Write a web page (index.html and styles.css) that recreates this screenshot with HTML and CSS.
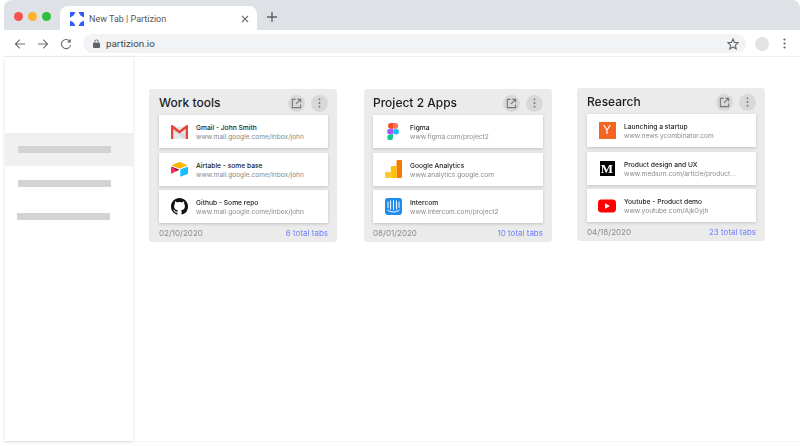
FILE: index.html
```html
<!DOCTYPE html>
<html lang="en">
<head>
  <meta charset="UTF-8">
  <title>New Tab | Partizion</title>
  <link rel="stylesheet" href="styles.css">
</head>
<body>
  <div class="browser">
    <div class="tab-strip">
      <div class="lights">
        <span class="light light-red"></span>
        <span class="light light-yellow"></span>
        <span class="light light-green"></span>
      </div>
      <div class="tab">
        <svg class="tab-logo" viewBox="0 0 14 14" width="14" height="14">
          <path fill="#2f5bff" d="M0 0H5.5L3.5 3.5L0 5.5ZM14 0H8.5L10.5 3.5L14 5.5ZM0 14H5.5L3.5 10.5L0 8.5ZM14 14H8.5L10.5 10.5L14 8.5Z"/>
        </svg>
        <span class="tab-title">New Tab | Partizion</span>
        <svg class="tab-close" viewBox="0 0 8 8" width="8" height="8">
          <path d="M1 1L7 7M7 1L1 7" stroke="#6b6f73" stroke-width="1.1" fill="none"/>
        </svg>
      </div>
      <svg class="new-tab" viewBox="0 0 10 10" width="10" height="10">
        <path d="M5 0V10M0 5H10" stroke="#5f6368" stroke-width="1.4" fill="none"/>
      </svg>
    </div>

    <div class="toolbar">
      <svg class="nav-icon" viewBox="0 0 12 12" width="12" height="12">
        <path d="M11 6H1.5M5.8 1.6L1.4 6L5.8 10.4" stroke="#6b6f73" stroke-width="1.1" fill="none"/>
      </svg>
      <svg class="nav-icon" viewBox="0 0 12 12" width="12" height="12">
        <path d="M1 6H10.5M6.2 1.6L10.6 6L6.2 10.4" stroke="#6b6f73" stroke-width="1.1" fill="none"/>
      </svg>
      <svg class="nav-icon" viewBox="0 0 12 12" width="12" height="12">
        <path d="M10 3.6A4.6 4.6 0 1 0 10.6 7" stroke="#6b6f73" stroke-width="1.1" fill="none"/>
        <path d="M10.8 0.8V4.6H7Z" fill="#6b6f73"/>
      </svg>
      <div class="url-bar">
        <svg class="lock" viewBox="0 0 8 10" width="7" height="9">
          <path fill="#5f6368" d="M1 4H1.6V2.8A2.4 2.4 0 0 1 6.4 2.8V4H7A1 1 0 0 1 8 5V9A1 1 0 0 1 7 10H1A1 1 0 0 1 0 9V5A1 1 0 0 1 1 4ZM2.6 4H5.4V2.8A1.4 1.4 0 0 0 2.6 2.8Z"/>
        </svg>
        <span class="url-text">partizion.io</span>
        <svg class="star" viewBox="0 0 12 12" width="12" height="12">
          <path d="M6 1L7.5 4.4L11.2 4.8L8.4 7.2L9.2 10.9L6 9L2.8 10.9L3.6 7.2L0.8 4.8L4.5 4.4Z" stroke="#5f6368" stroke-width="1.1" fill="none"/>
        </svg>
      </div>
      <span class="avatar"></span>
      <svg class="chrome-menu" viewBox="0 0 3 11" width="3" height="11">
        <circle cx="1.5" cy="1.5" r="1.1" fill="#5f6368"/>
        <circle cx="1.5" cy="5.5" r="1.1" fill="#5f6368"/>
        <circle cx="1.5" cy="9.5" r="1.1" fill="#5f6368"/>
      </svg>
    </div>

    <div class="page">
      <aside class="sidebar">
        <div class="side-item side-item-active"><span class="side-bar"></span></div>
        <div class="side-item"><span class="side-bar"></span></div>
        <div class="side-item"><span class="side-bar side-bar-shift"></span></div>
      </aside>

      <main class="boards">
        <section class="card">
          <header class="card-head">
            <h2>Work tools</h2>
            <button class="round-btn"><svg viewBox="0 0 12 12" width="11" height="11"><path class="open-icon" d="M5 1.5H1.5V10.5H10.5V7M7 1.5H10.5V5M10.5 1.5L5.5 6.5"/></svg></button>
            <button class="round-btn"><svg viewBox="0 0 3 11" width="3" height="10"><circle cx="1.5" cy="1.5" r="1" fill="#777"/><circle cx="1.5" cy="5.5" r="1" fill="#777"/><circle cx="1.5" cy="9.5" r="1" fill="#777"/></svg></button>
          </header>
          <div class="rows">
            <div class="row">
              <div class="row-icon">
                <svg viewBox="0 0 17 14" width="17" height="14">
                  <path fill="#e8eaea" d="M3 1.5H14V14H3Z"/>
                  <path fill="#d2d6d6" d="M3 3.5L14 10V14L3 6Z"/>
                  <path fill="#ea4335" d="M0 1.2C0 .2 1 -.2 1.8 .3L8.5 5.6L15.2 .3C16 -.2 17 .2 17 1.2V14H14.6V4L8.5 8.6L2.4 4V14H0Z"/>
                </svg>
              </div>
              <div class="row-text"><div class="row-title">Gmail - John Smith</div><div class="row-url">www.mail.google.come/inbox/john</div></div>
            </div>
            <div class="row">
              <div class="row-icon">
                <svg viewBox="0 0 17 15" width="17" height="15">
                  <path fill="#fcb400" d="M7.6 .3L1.3 2.9C.9 3.1 .9 3.6 1.3 3.8L7.6 6.3C8.2 6.5 8.8 6.5 9.4 6.3L15.7 3.8C16.1 3.6 16.1 3.1 15.7 2.9L9.4 .3C8.8 0 8.2 0 7.6 .3Z"/>
                  <path fill="#18bfff" d="M9.3 7.8V14C9.3 14.4 9.6 14.6 10 14.5L16.6 11.9C16.8 11.8 17 11.6 17 11.4V5.2C17 4.8 16.6 4.6 16.3 4.7L9.6 7.3C9.4 7.4 9.3 7.6 9.3 7.8Z"/>
                  <path fill="#f82b60" d="M7.7 8.1L5.8 9L.8 11.4C.4 11.6 0 11.3 0 10.9V5.3C0 5.1 .1 5 .2 4.9L.5 4.7C.6 4.7 .8 4.7 .9 4.7L7.7 7.4C8 7.6 8.1 8 7.7 8.1Z"/>
                  <path fill="#8f1d3f" d="M7.7 8.1L5.8 9L.9 4.7C1 4.7 1 4.7 1 4.7L7.7 7.4C8 7.6 8.1 8 7.7 8.1Z"/>
                </svg>
              </div>
              <div class="row-text"><div class="row-title">Airtable - some base</div><div class="row-url">www.mail.google.come/inbox/john</div></div>
            </div>
            <div class="row">
              <div class="row-icon">
                <svg viewBox="0 0 16 16" width="17" height="17">
                  <path fill="#111" d="M8 0C3.58 0 0 3.58 0 8c0 3.54 2.29 6.53 5.47 7.59.4.07.55-.17.55-.38 0-.19-.01-.82-.01-1.49-2.01.37-2.53-.49-2.69-.94-.09-.23-.48-.94-.82-1.13-.28-.15-.68-.52-.01-.53.63-.01 1.08.58 1.23.82.72 1.21 1.87.87 2.33.66.07-.52.28-.87.51-1.07-1.78-.2-3.64-.89-3.64-3.95 0-.87.31-1.59.82-2.15-.08-.2-.36-1.02.08-2.12 0 0 .67-.21 2.2.82.64-.18 1.32-.27 2-.27.68 0 1.36.09 2 .27 1.53-1.04 2.2-.82 2.2-.82.44 1.1.16 1.92.08 2.12.51.56.82 1.27.82 2.15 0 3.07-1.87 3.75-3.65 3.95.29.25.54.73.54 1.48 0 1.07-.01 1.93-.01 2.2 0 .21.15.46.55.38A8.013 8.013 0 0016 8c0-4.42-3.58-8-8-8z"/>
                </svg>
              </div>
              <div class="row-text"><div class="row-title">Github - Some repo</div><div class="row-url">www.mail.google.come/inbox/john</div></div>
            </div>
          </div>
          <footer class="card-foot"><span class="card-date">02/10/2020</span><span class="card-total">6 total tabs</span></footer>
        </section>

        <section class="card card-apps">
          <header class="card-head">
            <h2>Project 2 Apps</h2>
            <button class="round-btn"><svg viewBox="0 0 12 12" width="11" height="11"><path class="open-icon" d="M5 1.5H1.5V10.5H10.5V7M7 1.5H10.5V5M10.5 1.5L5.5 6.5"/></svg></button>
            <button class="round-btn"><svg viewBox="0 0 3 11" width="3" height="10"><circle cx="1.5" cy="1.5" r="1" fill="#777"/><circle cx="1.5" cy="5.5" r="1" fill="#777"/><circle cx="1.5" cy="9.5" r="1" fill="#777"/></svg></button>
          </header>
          <div class="rows">
            <div class="row">
              <div class="row-icon">
                <svg viewBox="0 0 12 17" width="12" height="17">
                  <path fill="#f24e1e" d="M6 0H3A3 3 0 0 0 3 5.7H6Z"/>
                  <path fill="#ff7262" d="M6 0H9A2.9 2.9 0 0 1 9 5.7H6Z"/>
                  <path fill="#a259ff" d="M6 5.7H3A2.85 2.85 0 0 0 3 11.4H6Z"/>
                  <circle fill="#1abcfe" cx="9" cy="8.55" r="2.85"/>
                  <path fill="#0acf83" d="M3 11.4H6V14.2A2.9 2.9 0 1 1 3 11.4Z"/>
                </svg>
              </div>
              <div class="row-text"><div class="row-title">Figma</div><div class="row-url">www.figma.com/project2</div></div>
            </div>
            <div class="row">
              <div class="row-icon">
                <svg viewBox="0 0 17 18" width="17" height="18">
                  <path fill="#f57c00" d="M11.5 1.2C11.5 .5 12 0 12.7 0H15.8C16.5 0 17 .5 17 1.2V16.8C17 17.5 16.5 18 15.8 18H11.5Z"/>
                  <path fill="#ffc107" d="M5.8 7.2C5.8 6.5 6.3 6 7 6H11.5V18H5.8Z"/>
                  <path fill="#ffca28" d="M1 12H5.8V18H1C.4 18 0 17.6 0 17V13C0 12.4 .4 12 1 12Z"/>
                </svg>
              </div>
              <div class="row-text"><div class="row-title">Google Analytics</div><div class="row-url">www.analytics.google.com</div></div>
            </div>
            <div class="row">
              <div class="row-icon">
                <svg viewBox="0 0 17 17" width="17" height="17">
                  <rect width="17" height="17" rx="2.4" fill="#1f8ded"/>
                  <path d="M3 4V9.5M5.6 3V11M8.5 2.6V11.5M11.4 3V11M14 4V9.5" stroke="#fff" stroke-width="1" stroke-linecap="round" fill="none"/>
                  <path d="M2.8 12.2C6 14.6 11 14.6 14.2 12.2" stroke="#fff" stroke-width="1" stroke-linecap="round" fill="none"/>
                </svg>
              </div>
              <div class="row-text"><div class="row-title">Intercom</div><div class="row-url">www.intercom.com/project2</div></div>
            </div>
          </div>
          <footer class="card-foot"><span class="card-date">08/01/2020</span><span class="card-total">10 total tabs</span></footer>
        </section>

        <section class="card card-research">
          <header class="card-head">
            <h2>Research</h2>
            <button class="round-btn"><svg viewBox="0 0 12 12" width="11" height="11"><path class="open-icon" d="M5 1.5H1.5V10.5H10.5V7M7 1.5H10.5V5M10.5 1.5L5.5 6.5"/></svg></button>
            <button class="round-btn"><svg viewBox="0 0 3 11" width="3" height="10"><circle cx="1.5" cy="1.5" r="1" fill="#777"/><circle cx="1.5" cy="5.5" r="1" fill="#777"/><circle cx="1.5" cy="9.5" r="1" fill="#777"/></svg></button>
          </header>
          <div class="rows">
            <div class="row">
              <div class="row-icon"><span class="logo-yc">Y</span></div>
              <div class="row-text"><div class="row-title">Launching a startup</div><div class="row-url">www.news.ycombinator.com</div></div>
            </div>
            <div class="row">
              <div class="row-icon"><span class="logo-medium">M</span></div>
              <div class="row-text"><div class="row-title">Product design and UX</div><div class="row-url">www.medium.com/article/product...</div></div>
            </div>
            <div class="row">
              <div class="row-icon">
                <svg viewBox="0 0 18 14" width="18" height="14">
                  <rect width="18" height="13" y=".5" rx="3.4" fill="#f00"/>
                  <path d="M7 4.2L12 7L7 9.8Z" fill="#fff"/>
                </svg>
              </div>
              <div class="row-text"><div class="row-title">Youtube - Product demo</div><div class="row-url">www.youtube.com/AjkGyjh</div></div>
            </div>
          </div>
          <footer class="card-foot"><span class="card-date">04/18/2020</span><span class="card-total">23 total tabs</span></footer>
        </section>
      </main>
    </div>
  </div>
</body>
</html>
```

FILE: styles.css
```css
* {
  box-sizing: border-box;
}
body {
  margin: 0;
  height: 446px;
  overflow: hidden;
  background: white;
  font-family: "Inter", "Liberation Sans", sans-serif;
}
.browser {
  margin-left: 4px;
}

/* tab strip */
.tab-strip {
  display: flex;
  align-items: flex-end;
  height: 30px;
  background: #dee1e6;
  border-radius: 8px 8px 0 0;
}
.lights {
  display: flex;
  align-self: center;
  gap: 5px;
  width: 56px;
  padding-left: 10px;
  margin-top: 2px;
}
.light {
  width: 9px;
  height: 9px;
  border-radius: 50%;
}
.light-red { background: #f0524f; }
.light-yellow { background: #fbb32d; }
.light-green { background: #2dbf3e; }
.tab {
  display: flex;
  align-items: center;
  width: 197px;
  height: 24px;
  padding: 1px 8px 0 10px;
  background: white;
  border-radius: 8px 8px 0 0;
}
.tab-logo {
  flex: none;
  margin-right: 5px;
}
.tab-title {
  flex: 1;
  font-family: "Roboto", sans-serif;
  font-size: 9px;
  color: #555;
}
.new-tab {
  align-self: center;
  margin: 4px 0 0 10px;
}

/* toolbar */
.toolbar {
  display: flex;
  align-items: center;
  height: 27px;
  padding: 1px 14px 0 10px;
  background: white;
  border-bottom: 1px solid #f0f0f0;
}
.nav-icon {
  flex: none;
  margin-right: 11px;
}
.url-bar {
  display: flex;
  align-items: center;
  flex: 1;
  height: 19px;
  margin: 0 9px 0 0;
  padding: 0 7px 0 10px;
  background: #f1f3f4;
  border-radius: 10px;
}
.lock {
  margin-right: 6px;
}
.url-text {
  flex: 1;
  font-family: "Roboto", sans-serif;
  font-size: 9.8px;
  color: #444;
}
.avatar {
  flex: none;
  width: 14px;
  height: 14px;
  background: #e3e3e3;
  border-radius: 50%;
  margin-right: 14px;
}

/* page */
.page {
  display: flex;
  height: 385px;
  border-bottom: 1px solid #f6f6f6;
}
.sidebar {
  flex: none;
  width: 128px;
  height: 384px;
  margin-left: 1px;
  padding-top: 76px;
  background: white;
  box-shadow: 0 1px 4px rgba(0, 0, 0, 0.12);
}
.side-item {
  display: flex;
  align-items: center;
  height: 33.4px;
  padding-left: 13px;
}
.side-item-active {
  background: #f0f0f0;
}
.side-bar {
  width: 93px;
  height: 7px;
  background: #d3d3d3;
}
.side-bar-shift {
  margin-left: -1px;
}

/* boards */
.boards {
  display: flex;
  gap: 27px;
  padding: 32px 0 0 16px;
  will-change: opacity;
}
.card {
  width: 188px;
  height: 153px;
  padding: 0 9px 0 10px;
  background: #ebebeb;
  border-radius: 3px;
}
.card-apps {
  padding-left: 9px;
}
.card-research {
  margin: -1px 0 0 -2px;
}
.card-head {
  display: flex;
  align-items: center;
  gap: 6px;
  height: 26px;
  padding-top: 2px;
}
.card-head h2 {
  flex: 1;
  margin: -2px 0 0;
  font-size: 12px;
  font-weight: 500;
  color: #1c1c1c;
}
.round-btn {
  display: flex;
  align-items: center;
  justify-content: center;
  width: 17px;
  height: 17px;
  padding: 0;
  border: none;
  border-radius: 50%;
  background: #d8d8d8;
}
.open-icon {
  fill: none;
  stroke: #777;
  stroke-width: 1.2;
}
.rows {
  display: flex;
  flex-direction: column;
  gap: 4.5px;
}
.row {
  display: flex;
  align-items: center;
  height: 33px;
  padding-left: 11px;
  background: white;
  box-shadow: 0 1px 3px rgba(0, 0, 0, 0.18);
}
.row-icon {
  display: flex;
  align-items: center;
  justify-content: center;
  flex: none;
  width: 18px;
  height: 20px;
  margin-right: 8px;
}
.row-text {
  padding-top: 2px;
}
.row:nth-child(2) .row-text {
  padding-top: 4px;
}
.row-title {
  font-size: 6.7px;
  font-weight: 500;
  line-height: 9px;
  color: #222;
}
.row-url {
  font-size: 6.6px;
  line-height: 9px;
  color: #8a8a8a;
}
.card-foot {
  display: flex;
  justify-content: space-between;
  align-items: center;
  height: 19px;
  font-size: 8px;
}
.card-date {
  color: #8a8a8a;
}
.card-total {
  color: #6f82ff;
}
.logo-yc {
  width: 17px;
  height: 17px;
  background: #f26522;
  color: white;
  font-family: "Liberation Sans", sans-serif;
  font-size: 12px;
  line-height: 17px;
  text-align: center;
}
.logo-medium {
  width: 15px;
  height: 15px;
  background: #000;
  color: white;
  font-family: "Liberation Serif", serif;
  font-size: 13px;
  font-weight: bold;
  line-height: 15px;
  text-align: center;
}
```
